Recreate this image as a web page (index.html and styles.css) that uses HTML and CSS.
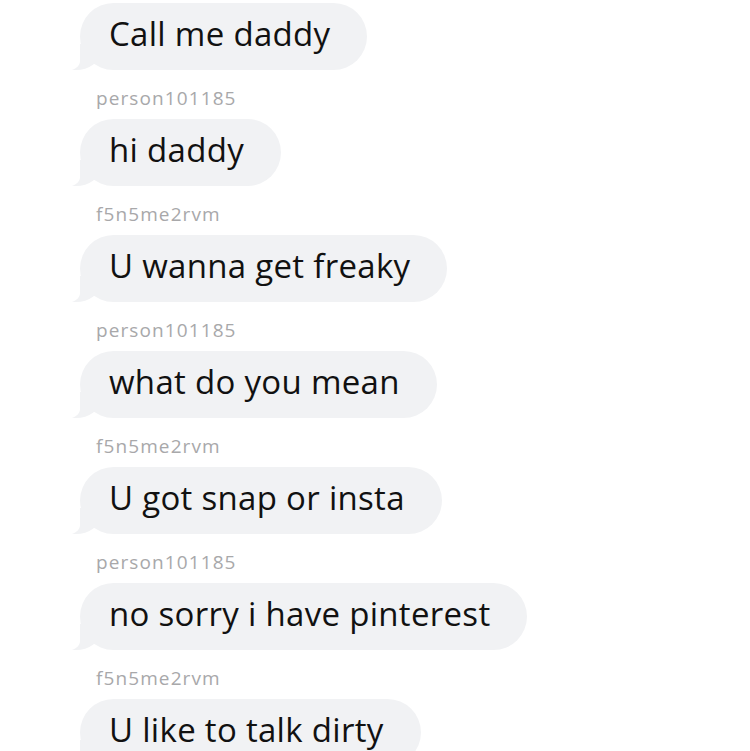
FILE: index.html
```html
<!DOCTYPE html>
<html>
<head>
<meta charset="utf-8">
<link rel="stylesheet" href="styles.css">
</head>
<body>
<div class="thread">
  <div class="bubble">Call me daddy</div>
  <div class="name">person101185</div>
  <div class="bubble">hi daddy</div>
  <div class="name">f5n5me2rvm</div>
  <div class="bubble">U wanna get freaky</div>
  <div class="name">person101185</div>
  <div class="bubble">what do you mean</div>
  <div class="name">f5n5me2rvm</div>
  <div class="bubble">U got snap or insta</div>
  <div class="name">person101185</div>
  <div class="bubble">no sorry i have pinterest</div>
  <div class="name">f5n5me2rvm</div>
  <div class="bubble">U like to talk dirty</div>
</div>
</body>
</html>
```
FILE: styles.css
```css
html, body {
  margin: 0;
  padding: 0;
  background: #ffffff;
  overflow: hidden;
}
.thread {
  display: flex;
  flex-direction: column;
  align-items: flex-start;
  padding: 3px 0 0 80px;
  font-family: "Open Sans", Lato, sans-serif;
}
.bubble {
  position: relative;
  flex: none;
  box-sizing: border-box;
  height: 67px;
  line-height: 62px;
  padding: 0 37px 0 29px;
  border-radius: 34px;
  background: #f1f2f4;
  color: #111111;
  font-size: 33px;
  letter-spacing: 0.3px;
  white-space: nowrap;
}
.bubble::before {
  content: "";
  position: absolute;
  left: -10px;
  bottom: 0;
  width: 30px;
  height: 26px;
  background: #f1f2f4;
  border-bottom-right-radius: 24px 18px;
}
.bubble::after {
  content: "";
  position: absolute;
  left: -20px;
  bottom: -1px;
  width: 20px;
  height: 28px;
  background: #ffffff;
  border-bottom-right-radius: 14px 10px;
}
.name {
  flex: none;
  height: 49px;
  box-sizing: border-box;
  padding: 16px 0 0 16px;
  line-height: 24px;
  font-size: 19px;
  letter-spacing: 1.1px;
  color: #a8a8aa;
}
```
